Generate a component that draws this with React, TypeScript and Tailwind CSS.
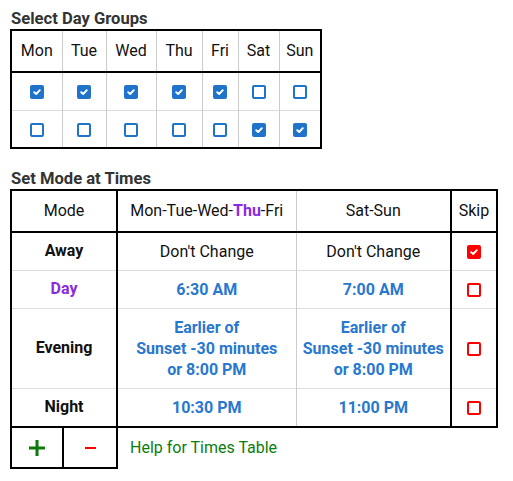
import React from "react";

function Box({ checked, color = "blue" }: { checked: boolean; color?: "blue" | "red" }) {
  const tone = color === "red" ? "border-[#ff0000] bg-[#ff0000]" : "border-[#1f74c9] bg-[#1f74c9]";
  const empty = color === "red" ? "border-[#ff0000] bg-white" : "border-[#1f74c9] bg-white";
  return (
    <span
      className={`inline-flex w-[14px] h-[14px] rounded-[2px] border-2 items-center justify-center align-middle ${
        checked ? tone : empty
      }`}
    >
      {checked && (
        <svg width="10" height="10" viewBox="0 0 10 10">
          <path d="M2.2 5.2 L4.2 7 L7.8 3.2" fill="none" stroke="white" strokeWidth="1.9" strokeLinecap="round" strokeLinejoin="round" />
        </svg>
      )}
    </span>
  );
}

const days = [
  { name: "Mon", w: "w-[51px]" },
  { name: "Tue", w: "w-[44px]" },
  { name: "Wed", w: "w-[50px]" },
  { name: "Thu", w: "w-[46px]" },
  { name: "Fri", w: "w-[36px]" },
  { name: "Sat", w: "w-[41px]" },
  { name: "Sun", w: "w-[42px]" },
];

const groups = [
  [true, true, true, true, true, false, false],
  [false, false, false, false, false, true, true],
];

type Mode = {
  name: string;
  purple?: boolean;
  weekday: React.ReactNode;
  weekend: React.ReactNode;
  plain?: boolean;
  skip: boolean;
  h: string;
};

const evening = (
  <>
    Earlier of
    <br />
    Sunset -30 minutes
    <br />
    or 8:00 PM
  </>
);

const modes: Mode[] = [
  { name: "Away", weekday: "Don't Change", weekend: "Don't Change", plain: true, skip: true, h: "h-[38px]" },
  { name: "Day", purple: true, weekday: "6:30 AM", weekend: "7:00 AM", skip: false, h: "h-[38px]" },
  { name: "Evening", weekday: evening, weekend: evening, skip: false, h: "h-[80px]" },
  { name: "Night", weekday: "10:30 PM", weekend: "11:00 PM", skip: false, h: "h-[39px]" },
];

export default function App() {
  return (
    <div className="bg-white w-[513px] h-[481px] text-[#111] text-base" style={{ fontFamily: "Roboto, 'Noto Sans', sans-serif" }}>
      <div className="pt-[9px] pl-[11px] font-bold text-[16.6px] text-[#333] leading-[19px]">Select Day Groups</div>
      <table className="border-collapse border-2 border-black ml-[10px] mt-[1px]">
        <thead>
          <tr className="border-b-2 border-black">
            {days.map((d) => (
              <th key={d.name} className={`${d.w} h-[42px] p-0 font-normal text-center border-x border-[#ccc]`}>
                {d.name}
              </th>
            ))}
          </tr>
        </thead>
        <tbody>
          {groups.map((g, i) => (
            <tr key={i} className="border-b border-[#ddd]">
              {g.map((c, j) => (
                <td key={j} className="h-[38px] p-0 text-center border-x border-[#ccc]">
                  <Box checked={c} />
                </td>
              ))}
            </tr>
          ))}
        </tbody>
      </table>

      <div className="mt-[20px] pl-[11px] font-bold text-[16.6px] text-[#333] leading-[19px]">Set Mode at Times</div>
      <table className="border-collapse border-2 border-black ml-[10px] mt-[1px]">
        <thead>
          <tr className="border-b-2 border-black">
            <th className="w-[106px] h-[42px] p-0 font-normal border-r-2 border-black">Mode</th>
            <th className="w-[179px] p-0 font-normal border-r border-[#ccc] whitespace-nowrap">
              Mon-Tue-Wed-<span className="font-bold text-[#8a2be2]">Thu</span>-Fri
            </th>
            <th className="w-[155px] p-0 font-normal">Sat-Sun</th>
            <th className="w-[46px] p-0 font-normal border-l-2 border-black">Skip</th>
          </tr>
        </thead>
        <tbody>
          {modes.map((m) => (
            <tr key={m.name} className="border-b border-[#ddd]">
              <td className={`${m.h} p-0 text-center font-bold border-r-2 border-black ${m.purple ? "text-[#8a2be2]" : "text-[#111]"}`}>
                {m.name}
              </td>
              <td
                className={`p-0 text-center leading-[21px] border-r border-[#ccc] whitespace-nowrap ${
                  m.plain ? "text-[#111]" : "font-bold text-[#2878cf]"
                }`}
              >
                {m.weekday}
              </td>
              <td className={`p-0 text-center leading-[21px] whitespace-nowrap ${m.plain ? "text-[#111]" : "font-bold text-[#2878cf]"}`}>
                {m.weekend}
              </td>
              <td className="p-0 text-center border-l-2 border-black">
                <Box checked={m.skip} color="red" />
              </td>
            </tr>
          ))}
        </tbody>
      </table>

      {/* add / remove buttons + help link */}
      <div className="flex items-center ml-[10px] -mt-[2px]">
        <div className="flex w-[108px] h-[43px] border-2 border-black">
          <button className="w-[52px] border-r-2 border-black flex items-center justify-center">
            <svg width="16" height="16" viewBox="0 0 16 16">
              <path d="M8 0 V16 M0 8 H16" stroke="#0a7a0a" strokeWidth="3" />
            </svg>
          </button>
          <button className="flex-1 flex items-center justify-center">
            <svg width="11" height="4" viewBox="0 0 11 4">
              <path d="M0 2 H11" stroke="#ff0000" strokeWidth="2" />
            </svg>
          </button>
        </div>
        <span className="ml-[12px] text-[#0b7d0b]">Help for Times Table</span>
      </div>
    </div>
  );
}
